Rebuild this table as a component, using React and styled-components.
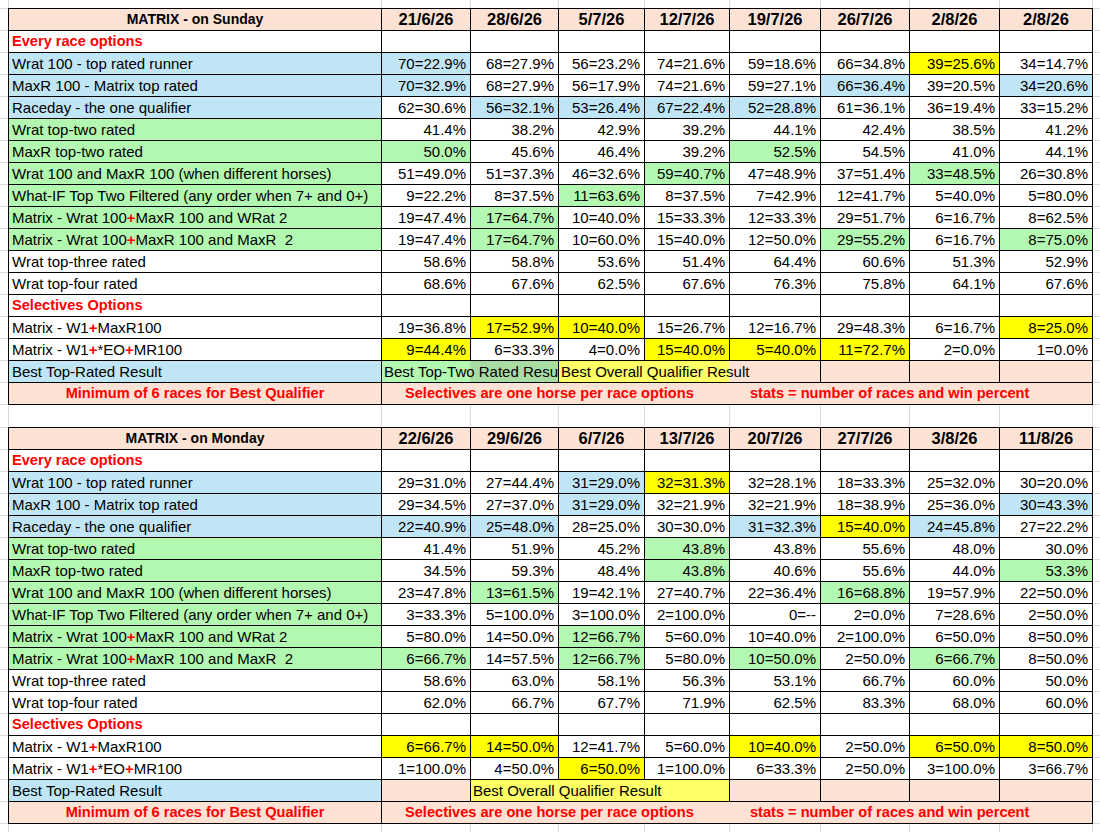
import React from "react";
import styled, { createGlobalStyle } from "styled-components";

const COLS = "372px 88px 87px 85px 84px 90px 88px 89px 92px";

const C = {
  peach: "#fbe2d5",
  blue: "#c0e6f5",
  green: "#b3f8b0",
  greenDark: "#a9dca2",
  yellow: "#ffff00",
  softYellow: "#ffff66",
  red: "#ff0000",
  grid: "#dadada",
};

const Global = createGlobalStyle`
  html, body { margin: 0; padding: 0; background: #fff; }
  body { font-family: "Liberation Sans", Arial, sans-serif; color: #000; }
`;

const Sheet = styled.div`
  width: 1100px;
  height: 832px;
  overflow: hidden;
  display: flex;
  flex-direction: column;
  background: #fff;
`;

const Ghost = styled.div`
  display: grid;
  grid-template-columns: ${COLS};
  column-gap: 1px;
  padding: 0 1px;
  margin-left: 8px;
  width: 1085px;
  box-sizing: border-box;
  height: ${(p) => p.$h}px;
  background: ${C.grid};
  flex: none;
  & > div { background: #fff; }
`;

const Band = styled.div`
  width: 1100px;
  padding-left: 8px;
  box-sizing: border-box;
  flex: none;
  background-image: linear-gradient(to bottom, transparent 0 21px, ${C.grid} 21px 22px);
  background-size: 100% 22px;
  background-position: 0 1px;
`;

const Table = styled.div`
  display: grid;
  grid-template-columns: ${COLS};
  grid-auto-rows: 21px;
  gap: 1px;
  padding: 1px;
  width: 1085px;
  box-sizing: border-box;
  background: #000;
`;

const Cell = styled.div`
  background: ${(p) => p.$bg || "#fff"};
  font-size: 15px;
  line-height: 21px;
  white-space: pre;
  overflow: hidden;
  grid-column: ${(p) => (p.$span ? `span ${p.$span}` : "auto")};
`;

const Label = styled(Cell)`
  padding-left: 3px;
`;

const Num = styled(Cell)`
  text-align: right;
  padding-right: 4px;
`;

const Title = styled(Cell)`
  background: ${C.peach};
  font-weight: bold;
  font-size: 14px;
  text-align: center;
`;

const DateHead = styled(Cell)`
  background: ${C.peach};
  font-weight: bold;
  font-size: 16.5px;
  text-align: center;
`;

const Section = styled(Cell)`
  padding-left: 3px;
  color: ${C.red};
  font-weight: bold;
  font-size: 14.6px;
`;

const Plus = styled.span`
  color: ${C.red};
  font-weight: bold;
`;

const LegendBox = styled(Cell)`
  padding-left: ${(p) => p.$pad || 2}px;
  background: ${(p) => p.$bg};
  overflow: ${(p) => (p.$clip ? "hidden" : "visible")};
  position: relative;
  z-index: ${(p) => (p.$clip ? 0 : 1)};
`;

const NoteCenter = styled(Cell)`
  background: ${C.peach};
  color: ${C.red};
  font-weight: bold;
  font-size: 14.6px;
  text-align: center;
`;

const NoteRow = styled(Cell)`
  background: ${C.peach};
  color: ${C.red};
  font-weight: bold;
  font-size: 14.6px;
  display: flex;
  padding-left: 23px;
`;

const NoteText = styled.span`
  width: ${(p) => (p.$w ? `${p.$w}px` : "auto")};
  flex: none;
`;

const BG = { b: C.blue, g: C.green, y: C.yellow, w: "#fff" };

const withPlus = (text) => {
  const parts = text.split("+");
  return parts.map((p, i) => (
    <React.Fragment key={i}>
      {i > 0 && <Plus>+</Plus>}
      {p}
    </React.Fragment>
  ));
};

const sunday = {
  title: "MATRIX - on Sunday",
  dates: ["21/6/26", "28/6/26", "5/7/26", "12/7/26", "19/7/26", "26/7/26", "2/8/26", "2/8/26"],
  every: [
    ["Wrat 100 - top rated runner", "b", ["70=22.9%b", "68=27.9%", "56=23.2%", "74=21.6%", "59=18.6%", "66=34.8%", "39=25.6%y", "34=14.7%"]],
    ["MaxR 100 - Matrix top rated", "b", ["70=32.9%b", "68=27.9%", "56=17.9%", "74=21.6%", "59=27.1%", "66=36.4%b", "39=20.5%", "34=20.6%b"]],
    ["Raceday - the one qualifier", "b", ["62=30.6%", "56=32.1%b", "53=26.4%b", "67=22.4%b", "52=28.8%b", "61=36.1%", "36=19.4%", "33=15.2%"]],
    ["Wrat top-two rated", "g", ["41.4%", "38.2%", "42.9%", "39.2%", "44.1%", "42.4%", "38.5%", "41.2%"]],
    ["MaxR top-two rated", "g", ["50.0%g", "45.6%", "46.4%", "39.2%", "52.5%g", "54.5%", "41.0%", "44.1%"]],
    ["Wrat 100 and MaxR 100 (when different horses)", "g", ["51=49.0%", "51=37.3%", "46=32.6%", "59=40.7%g", "47=48.9%", "37=51.4%", "33=48.5%g", "26=30.8%"]],
    ["What-IF Top Two Filtered (any order when 7+ and 0+)", "g", ["9=22.2%", "8=37.5%", "11=63.6%g", "8=37.5%", "7=42.9%", "12=41.7%", "5=40.0%", "5=80.0%"], true],
    ["Matrix - Wrat 100+MaxR 100 and WRat 2", "g", ["19=47.4%", "17=64.7%g", "10=40.0%", "15=33.3%", "12=33.3%", "29=51.7%", "6=16.7%", "8=62.5%"]],
    ["Matrix - Wrat 100+MaxR 100 and MaxR  2", "g", ["19=47.4%", "17=64.7%g", "10=60.0%", "15=40.0%", "12=50.0%", "29=55.2%g", "6=16.7%", "8=75.0%g"]],
    ["Wrat top-three rated", "w", ["58.6%", "58.8%", "53.6%", "51.4%", "64.4%", "60.6%", "51.3%", "52.9%"]],
    ["Wrat top-four rated", "w", ["68.6%", "67.6%", "62.5%", "67.6%", "76.3%", "75.8%", "64.1%", "67.6%"]],
  ],
  selective: [
    ["Matrix - W1+MaxR100", "w", ["19=36.8%", "17=52.9%y", "10=40.0%y", "15=26.7%", "12=16.7%", "29=48.3%", "6=16.7%", "8=25.0%y"]],
    ["Matrix - W1+*EO+MR100", "w", ["9=44.4%y", "6=33.3%", "4=0.0%", "15=40.0%y", "5=40.0%y", "11=72.7%y", "2=0.0%", "1=0.0%"]],
  ],
  legend: "sunday",
};

const monday = {
  title: "MATRIX - on Monday",
  dates: ["22/6/26", "29/6/26", "6/7/26", "13/7/26", "20/7/26", "27/7/26", "3/8/26", "11/8/26"],
  every: [
    ["Wrat 100 - top rated runner", "b", ["29=31.0%", "27=44.4%", "31=29.0%b", "32=31.3%y", "32=28.1%", "18=33.3%", "25=32.0%", "30=20.0%"]],
    ["MaxR 100 - Matrix top rated", "b", ["29=34.5%", "27=37.0%", "31=29.0%b", "32=21.9%", "32=21.9%", "18=38.9%", "25=36.0%", "30=43.3%b"]],
    ["Raceday - the one qualifier", "b", ["22=40.9%b", "25=48.0%b", "28=25.0%", "30=30.0%", "31=32.3%b", "15=40.0%y", "24=45.8%b", "27=22.2%"]],
    ["Wrat top-two rated", "g", ["41.4%", "51.9%", "45.2%", "43.8%g", "43.8%", "55.6%", "48.0%", "30.0%"]],
    ["MaxR top-two rated", "g", ["34.5%", "59.3%", "48.4%", "43.8%g", "40.6%", "55.6%", "44.0%", "53.3%g"]],
    ["Wrat 100 and MaxR 100 (when different horses)", "g", ["23=47.8%", "13=61.5%g", "19=42.1%", "27=40.7%", "22=36.4%", "16=68.8%g", "19=57.9%", "22=50.0%"]],
    ["What-IF Top Two Filtered (any order when 7+ and 0+)", "g", ["3=33.3%", "5=100.0%", "3=100.0%", "2=100.0%", "0=--", "2=0.0%", "7=28.6%", "2=50.0%"], true],
    ["Matrix - Wrat 100+MaxR 100 and WRat 2", "g", ["5=80.0%", "14=50.0%", "12=66.7%g", "5=60.0%", "10=40.0%", "2=100.0%", "6=50.0%", "8=50.0%"]],
    ["Matrix - Wrat 100+MaxR 100 and MaxR  2", "g", ["6=66.7%g", "14=57.5%", "12=66.7%g", "5=80.0%", "10=50.0%g", "2=50.0%", "6=66.7%g", "8=50.0%"]],
    ["Wrat top-three rated", "w", ["58.6%", "63.0%", "58.1%", "56.3%", "53.1%", "66.7%", "60.0%", "50.0%"]],
    ["Wrat top-four rated", "w", ["62.0%", "66.7%", "67.7%", "71.9%", "62.5%", "83.3%", "68.0%", "60.0%"]],
  ],
  selective: [
    ["Matrix - W1+MaxR100", "w", ["6=66.7%y", "14=50.0%y", "12=41.7%", "5=60.0%", "10=40.0%y", "2=50.0%", "6=50.0%y", "8=50.0%y"]],
    ["Matrix - W1+*EO+MR100", "w", ["1=100.0%", "4=50.0%", "6=50.0%y", "1=100.0%", "6=33.3%", "2=50.0%", "3=100.0%", "3=66.7%"]],
  ],
  legend: "monday",
};

const parse = (v) => {
  const last = v[v.length - 1];
  if (last === "b" || last === "g" || last === "y") return [v.slice(0, -1), BG[last]];
  return [v, "#fff"];
};

const DataRow = ({ row }) => {
  const [label, tone, values, literalPlus] = row;
  return (
    <>
      <Label $bg={BG[tone]}>{literalPlus ? label : withPlus(label)}</Label>
      {values.map((v, i) => {
        const [text, bg] = parse(v);
        return (
          <Num key={i} $bg={bg}>
            {text}
          </Num>
        );
      })}
    </>
  );
};

const EmptyRow = ({ title }) => (
  <>
    <Section>{title}</Section>
    {Array.from({ length: 8 }).map((_, i) => (
      <Cell key={i} />
    ))}
  </>
);

const LegendSunday = () => (
  <>
    <Label $bg={C.blue}>Best Top-Rated Result</Label>
    <LegendBox
      $span={2}
      $clip
      $pad={2}
      $bg={`linear-gradient(to right, ${C.green} 0 88px, ${C.greenDark} 88px)`}
    >
      Best Top-Two Rated Result
    </LegendBox>
    <LegendBox
      $span={3}
      $pad={2}
      $bg={`linear-gradient(to right, ${C.softYellow} 0 170px, ${C.peach} 170px)`}
    >
      Best Overall Qualifier Result
    </LegendBox>
    <Cell $bg={C.peach} />
    <Cell $bg={C.peach} />
    <Cell $bg={C.peach} />
  </>
);

const LegendMonday = () => (
  <>
    <Label $bg={C.blue}>Best Top-Rated Result</Label>
    <Cell $bg={C.peach} />
    <LegendBox $span={3} $pad={2} $bg={C.softYellow}>
      Best Overall Qualifier Result
    </LegendBox>
    <Cell $bg={C.peach} />
    <Cell $bg={C.peach} />
    <Cell $bg={C.peach} />
    <Cell $bg={C.peach} />
  </>
);

const Notes = () => (
  <>
    <NoteCenter>Minimum of 6 races for Best Qualifier</NoteCenter>
    <NoteRow $span={8}>
      <NoteText $w={345}>Selectives are one horse per race options</NoteText>
      <NoteText>stats = number of races and win percent</NoteText>
    </NoteRow>
  </>
);

const MatrixTable = ({ data }) => (
  <Band>
    <Table>
      <Title>{data.title}</Title>
      {data.dates.map((d, i) => (
        <DateHead key={i}>{d}</DateHead>
      ))}
      <EmptyRow title="Every race options" />
      {data.every.map((r, i) => (
        <DataRow key={i} row={r} />
      ))}
      <EmptyRow title="Selectives Options" />
      {data.selective.map((r, i) => (
        <DataRow key={i} row={r} />
      ))}
      {data.legend === "sunday" ? <LegendSunday /> : <LegendMonday />}
      <Notes />
    </Table>
  </Band>
);

const GhostRow = ({ h }) => (
  <Ghost $h={h}>
    {Array.from({ length: 9 }).map((_, i) => (
      <div key={i} />
    ))}
  </Ghost>
);

export default function App() {
  return (
    <>
      <Global />
      <Sheet>
        <GhostRow h={8} />
        <MatrixTable data={sunday} />
        <GhostRow h={22} />
        <MatrixTable data={monday} />
        <GhostRow h={20} />
      </Sheet>
    </>
  );
}
